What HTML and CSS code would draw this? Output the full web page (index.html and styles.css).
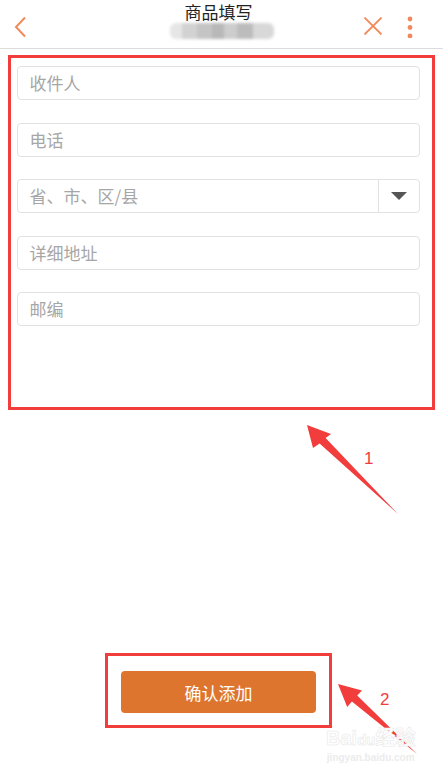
FILE: index.html
```html
<!DOCTYPE html>
<html lang="zh-CN">
<head>
    <meta charset="UTF-8">
    <meta name="viewport" content="width=device-width, initial-scale=1.0">
    <title>商品填写</title>
    <link rel="stylesheet" href="styles.css">
</head>
<body>

    <div class="page">
        <div class="header">
            <div class="header-left">
                <svg class="icon-back" width="14" height="22" viewBox="0 0 14 22">
                    <path d="M11 1.5 L2 11 L11 20.5" fill="none" stroke="#f08a5d" stroke-width="2"/>
                </svg>
            </div>
            <div class="header-title">
                <div class="title">商品填写</div>
                <div class="subtitle"></div>
            </div>
            <div class="header-right">
                <svg class="icon-close" width="20" height="18" viewBox="0 0 20 18">
                    <path d="M1.5 0.5 L18.5 17.5 M18.5 0.5 L1.5 17.5" stroke="#f08a5d" stroke-width="1.8"/>
                </svg>
                <svg class="icon-more" width="6" height="22" viewBox="0 0 6 22">
                    <circle cx="3" cy="3" r="2.4" fill="#f08a5d"/>
                    <circle cx="3" cy="11.5" r="2.4" fill="#f08a5d"/>
                    <circle cx="3" cy="20" r="2.4" fill="#f08a5d"/>
                </svg>
            </div>
        </div>

        <div class="form-box">
            <div class="input-field">收件人</div>
            <div class="input-field">电话</div>
            <div class="input-field select-field">
                <span class="select-text">省、市、区/县</span>
                <span class="select-arrow">
                    <svg width="16" height="8" viewBox="0 0 16 8"><path d="M0 0 H16 L8 8 Z" fill="#555"/></svg>
                </span>
            </div>
            <div class="input-field">详细地址</div>
            <div class="input-field">邮编</div>
        </div>

        <div class="button-box">
            <button class="button">确认添加</button>
        </div>

        <svg class="marks" width="443" height="776" viewBox="0 0 443 776">
            <polygon points="307,425 331,434 325.6,438 398,514 319.6,443.6 313,448" fill="#f23d3d"/>
            <polygon points="338,684 362,690.5 357.2,695.6 417,754 351.9,701.6 347.2,707" fill="#f23d3d"/>
        </svg>
        <div class="mark-label label-one">1</div>
        <div class="mark-label label-two">2</div>

        <div class="watermark">
            <div class="wm-logo">Bai<span class="wm-du">du</span>经验</div>
            <div class="wm-url">jingyan.baidu.com</div>
        </div>
    </div>

</body>
</html>
```

FILE: styles.css
```css
body {
    margin: 0;
    padding: 0;
    background: #fff;
    font-family: "Noto Sans CJK SC", "Noto Sans", sans-serif;
    color: #333;
}
.page {
    position: relative;
    width: 443px;
    height: 776px;
    overflow: hidden;
}
.header {
    display: grid;
    grid-template-columns: 1fr auto 1fr;
    height: 48px;
    border-bottom: 1px solid #dcdcdc;
}
.header-left {
    display: flex;
    align-items: flex-start;
    padding: 16px 0 0 14px;
}
.header-title {
    display: flex;
    flex-direction: column;
    align-items: center;
}
.title {
    font-size: 17px;
    line-height: 24px;
    margin-left: -6px;
    color: #222;
}
.subtitle {
    width: 104px;
    height: 16px;
    margin-top: -1px;
    border-radius: 6px;
    background: linear-gradient(90deg,
        #e6e6e6 0, #e6e6e6 12%, #d2d2d2 12%, #d2d2d2 26%, #c4c4c4 26%, #c4c4c4 40%,
        #b8b8b8 40%, #b8b8b8 52%, #cdcdcd 52%, #cdcdcd 64%, #bcbcbc 64%, #bcbcbc 80%,
        #d8d8d8 80%, #d8d8d8 100%);
    filter: blur(1.5px);
}
.header-right {
    display: flex;
    justify-content: flex-end;
    align-items: flex-start;
    gap: 24px;
    padding: 16px 30px 0 0;
}
.icon-close {
    margin-top: 1px;
}
.form-box {
    display: flex;
    flex-direction: column;
    gap: 22.5px;
    margin: 6px 8px 0 8px;
    width: 427px;
    height: 355px;
    padding: 8px 12px 0 5.5px;
    box-sizing: border-box;
    border: 3px solid #f23d3d;
}
.input-field {
    height: 34px;
    box-sizing: border-box;
    border: 1px solid #e2e2e2;
    border-radius: 4px;
    padding-left: 12px;
    font-size: 17px;
    line-height: 32px;
    color: #a6a6a6;
    display: flex;
}
.select-field {
    padding-left: 0;
}
.select-text {
    flex: 1;
    padding-left: 12px;
}
.select-arrow {
    width: 40px;
    border-left: 1px solid #e2e2e2;
    display: flex;
    align-items: center;
    justify-content: center;
}
.button-box {
    margin: 243px 0 0 105px;
    width: 227px;
    height: 75px;
    box-sizing: border-box;
    border: 3px solid #f23d3d;
    padding: 15px 13px 0 13px;
}
.button {
    width: 195px;
    height: 42px;
    background: #de752e;
    color: #fff;
    font-family: "Noto Sans CJK SC", sans-serif;
    font-size: 17px;
    border: none;
    border-radius: 4px;
    padding: 0;
}
.marks {
    position: absolute;
    left: 0;
    top: 0;
    pointer-events: none;
}
.mark-label {
    position: absolute;
    font-family: "Liberation Sans", sans-serif;
    font-size: 17px;
    line-height: 17px;
    color: #f23d3d;
}
.label-one {
    left: 364px;
    top: 450px;
}
.label-two {
    left: 380px;
    top: 691px;
}
.watermark {
    position: absolute;
    left: 326px;
    top: 727px;
    color: #fff;
    text-align: center;
}
.wm-logo {
    font-family: "Liberation Sans", "Noto Sans CJK SC", sans-serif;
    font-weight: bold;
    font-size: 20px;
    line-height: 22px;
    -webkit-text-stroke: 0.6px #e8e8e8;
}
.wm-du {
    font-size: 15px;
}
.wm-url {
    font-family: "Liberation Sans", sans-serif;
    font-weight: bold;
    font-size: 10px;
    line-height: 14px;
    color: #ececec;
}
```
